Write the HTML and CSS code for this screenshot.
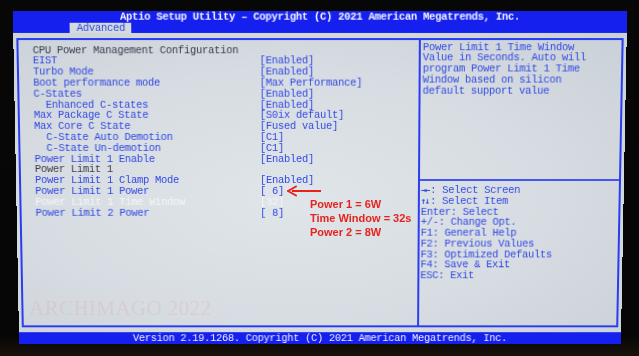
FILE: index.html
```html
<!DOCTYPE html>
<html lang="en">
<head>
    <meta charset="UTF-8">
    <meta name="viewport" content="width=device-width, initial-scale=1.0">
    <title>Aptio Setup Utility - Advanced</title>
    <link rel="stylesheet" href="styles.css">
</head>
<body>
    <div class="bezel">
        <div class="screen">
            <header class="topbar">
                <div class="title">Aptio Setup Utility &ndash; Copyright (C) 2021 American Megatrends, Inc.</div>
                <div class="tabs"><span class="tab">Advanced</span></div>
            </header>

            <main class="workspace">
                <div class="panel">
                    <section class="settings">
                        <div class="row plain"><span>CPU Power Management Configuration</span></div>
                        <div class="row"><span>EIST</span><span>[Enabled]</span></div>
                        <div class="row"><span>Turbo Mode</span><span>[Enabled]</span></div>
                        <div class="row"><span>Boot performance mode</span><span>[Max Performance]</span></div>
                        <div class="row"><span>C-States</span><span>[Enabled]</span></div>
                        <div class="row sub"><span>Enhanced C-states</span><span>[Enabled]</span></div>
                        <div class="row"><span>Max Package C State</span><span>[S0ix default]</span></div>
                        <div class="row"><span>Max Core C State</span><span>[Fused value]</span></div>
                        <div class="row sub"><span>C-State Auto Demotion</span><span>[C1]</span></div>
                        <div class="row sub"><span>C-State Un-demotion</span><span>[C1]</span></div>
                        <div class="row"><span>Power Limit 1 Enable</span><span>[Enabled]</span></div>
                        <div class="row plain"><span>Power Limit 1</span></div>
                        <div class="row"><span>Power Limit 1 Clamp Mode</span><span>[Enabled]</span></div>
                        <div class="row"><span>Power Limit 1 Power</span><span>[ 6]</span></div>
                        <div class="row selected"><span>Power Limit 1 Time Window</span><span>[32]</span></div>
                        <div class="row"><span>Power Limit 2 Power</span><span>[ 8]</span></div>
                    </section>

                    <aside class="side">
                        <div class="help">
                            <div>Power Limit 1 Time Window</div>
                            <div>Value in Seconds. Auto will</div>
                            <div>program Power Limit 1 Time</div>
                            <div>Window based on silicon</div>
                            <div>default support value</div>
                        </div>
                        <div class="keys">
                            <div><b class="glyph">&rarr;&larr;</b>: Select Screen</div>
                            <div><b class="glyph">&uarr;&darr;</b>: Select Item</div>
                            <div>Enter: Select</div>
                            <div>+/-: Change Opt.</div>
                            <div>F1: General Help</div>
                            <div>F2: Previous Values</div>
                            <div>F3: Optimized Defaults</div>
                            <div>F4: Save &amp; Exit</div>
                            <div>ESC: Exit</div>
                        </div>
                    </aside>
                </div>
            </main>

            <footer class="bottombar">Version 2.19.1268. Copyright (C) 2021 American Megatrends, Inc.</footer>
        </div>

        <div class="watermark">ARCHIMAGO 2022</div>

        <!-- annotation added on top of the photo -->
        <svg class="arrow" width="36" height="12" viewBox="0 0 36 12">
            <path d="M34 6 H5" stroke="#e8231e" stroke-width="2" fill="none"/>
            <path d="M1 6 L9 1.5 M1 6 L9 10.5" stroke="#e8231e" stroke-width="2" fill="none" stroke-linecap="round"/>
        </svg>
        <div class="note">
            <div>Power 1 = 6W</div>
            <div>Time Window = 32s</div>
            <div>Power 2 = 8W</div>
        </div>
    </div>
</body>
</html>
```

FILE: styles.css
```css
body {
    margin: 0;
    background: #050505;
    overflow: hidden;
}
.bezel {
    position: relative;
    width: 639px;
    height: 356px;
    padding-top: 12px;
    box-sizing: border-box;
    background: linear-gradient(#070707 0%, #060606 94%, #1a120c 100%);
}
.screen {
    width: 608px;
    height: 334px;
    margin-left: 16px;
    display: flex;
    flex-direction: column;
    font-family: "Liberation Mono", "DejaVu Sans Mono", monospace;
    font-size: 10.5px;
    letter-spacing: -0.3px;
    transform: perspective(1000px) rotateX(-3.6deg);
}
.topbar {
    height: 22px;
    background: #1520ee;
}
.title {
    height: 11px;
    line-height: 12px;
    text-align: center;
    color: #f2f4ff;
    font-weight: bold;
}
.tabs {
    height: 11px;
    padding-left: 56px;
}
.tab {
    display: inline-block;
    height: 11px;
    line-height: 11px;
    padding: 0 6px 0 7px;
    background: #d4dae0;
    color: #3048e0;
}
.workspace {
    flex: 1;
    padding: 5px 3px 5px 3px;
    background: radial-gradient(ellipse at 45% 55%, #e0e5e9 0%, #d6dce1 55%, #c9d0d7 100%);
}
.panel {
    height: 100%;
    box-sizing: border-box;
    border: 2px solid #2a3cf0;
    display: grid;
    grid-template-columns: 397px 1fr;
}
.settings {
    padding: 4.6px 0 0 14px;
    color: #3349e4;
}
.row {
    display: grid;
    grid-template-columns: 225px 1fr;
    height: 10.8px;
    line-height: 10.8px;
    white-space: pre;
}
.row.sub span:first-child {
    padding-left: 12px;
}
.row.plain {
    color: #3b3d4c;
}
.row.selected {
    color: #f3f6fa;
}
.side {
    border-left: 2px solid #2a3cf0;
    display: flex;
    flex-direction: column;
    color: #3349e4;
}
.help {
    height: 136px;
    padding: 1.6px 0 0 2px;
    line-height: 10.8px;
    border-bottom: 2px solid #4456ee;
}
.keys {
    padding: 4.6px 0 0 1px;
    line-height: 10.75px;
}
.glyph {
    font-family: "DejaVu Sans Mono", monospace;
    font-size: 9px;
    letter-spacing: -1.5px;
    margin-right: 1.5px;
}
.bottombar {
    height: 12px;
    line-height: 12px;
    background: #1520ee;
    color: #eef0ff;
    text-align: center;
}
.watermark {
    position: absolute;
    left: 29px;
    top: 296px;
    font-family: "Liberation Serif", serif;
    font-size: 21px;
    letter-spacing: 0.4px;
    color: rgba(225, 150, 155, 0.2);
}
.arrow {
    position: absolute;
    left: 287px;
    top: 185px;
}
.note {
    position: absolute;
    left: 310px;
    top: 197px;
    font-family: "Liberation Sans", Arial, sans-serif;
    font-weight: bold;
    font-size: 11px;
    line-height: 14px;
    color: #e8231e;
}
```
